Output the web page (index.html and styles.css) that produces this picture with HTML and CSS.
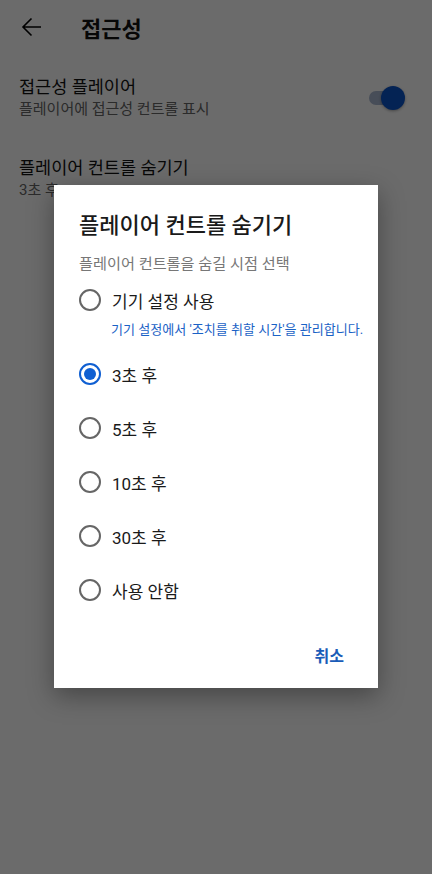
FILE: index.html
```html
<!DOCTYPE html>
<html lang="ko">
<head>
<meta charset="utf-8">
<link rel="stylesheet" href="styles.css">
</head>
<body>
<div class="page">
  <header class="appbar">
    <svg class="back" width="24" height="24" viewBox="0 0 24 24"><path d="M21 12H3.5M11.5 3.5L3 12l8.5 8.5" fill="none" stroke="#000" stroke-width="1.6"/></svg>
    <h1 class="appbar-title">접근성</h1>
  </header>
  <div class="setting">
    <div class="setting-text">
      <div class="setting-title">접근성 플레이어</div>
      <div class="setting-sub">플레이어에 접근성 컨트롤 표시</div>
    </div>
    <div class="switch"><div class="switch-track"></div><div class="switch-thumb"></div></div>
  </div>
  <div class="setting">
    <div class="setting-text">
      <div class="setting-title">플레이어 컨트롤 숨기기</div>
      <div class="setting-sub">3초 후</div>
    </div>
  </div>
</div>
<div class="scrim"></div>
<div class="dialog">
  <h2 class="dialog-title">플레이어 컨트롤 숨기기</h2>
  <p class="dialog-sub">플레이어 컨트롤을 숨길 시점 선택</p>
  <ul class="options">
    <li class="option option-device">
      <div class="option-row"><span class="radio"></span><span class="label">기기 설정 사용</span></div>
      <div class="hint">기기 설정에서 '조치를 취할 시간'을 관리합니다.</div>
    </li>
    <li class="option"><div class="option-row"><span class="radio checked"></span><span class="label">3초 후</span></div></li>
    <li class="option"><div class="option-row"><span class="radio"></span><span class="label">5초 후</span></div></li>
    <li class="option"><div class="option-row"><span class="radio"></span><span class="label">10초 후</span></div></li>
    <li class="option"><div class="option-row"><span class="radio"></span><span class="label">30초 후</span></div></li>
    <li class="option"><div class="option-row"><span class="radio"></span><span class="label">사용 안함</span></div></li>
  </ul>
  <div class="actions"><button class="btn">취소</button></div>
</div>
</body>
</html>
```
FILE: styles.css
```css
* { box-sizing: border-box; }
html, body { margin: 0; padding: 0; }
body {
  width: 432px;
  height: 874px;
  background: #fff;
  font-family: Roboto, "Noto Sans CJK KR", sans-serif;
  color: #111;
  overflow: hidden;
  position: relative;
}
.page { padding: 0; }
.appbar {
  height: 54px;
  display: flex;
  align-items: center;
  padding-left: 20px;
}
.back { display: block; }
.appbar-title {
  margin: 0 0 0 37px;
  font-size: 22px;
  font-weight: 700;
  color: #111;
}
.setting {
  display: flex;
  align-items: center;
  padding: 0 27px 0 19px;
}
.setting:nth-of-type(1) { margin-top: 22px; }
.setting + .setting { margin-top: 37px; }
.setting-text { flex: 1; }
.setting-title { font-size: 17.5px; line-height: 22px; color: #111; }
.setting-sub { font-size: 15px; line-height: 22px; color: #666; }
.switch { position: relative; width: 36px; height: 24px; }
.switch-track {
  position: absolute; left: 0; top: 5px; width: 34px; height: 14px;
  border-radius: 7px; background: #aab8d2;
}
.switch-thumb {
  position: absolute; right: 0; top: 0; width: 24px; height: 24px;
  border-radius: 50%; background: #0a53c9;
  box-shadow: 0 1px 3px rgba(0,0,0,0.35);
}
.scrim {
  position: absolute; inset: 0;
  background: rgba(0,0,0,0.58);
}
.dialog {
  position: absolute;
  left: 54px; top: 185px;
  width: 324px; height: 503px;
  background: #fff;
  box-shadow: 0 8px 24px rgba(0,0,0,0.35);
  padding: 25px 0 0 0;
}
.dialog-title {
  margin: 0 0 0 25px;
  font-size: 22px;
  line-height: 32px;
  font-weight: 500;
  color: #1a1a1a;
}
.dialog-sub {
  margin: 13px 0 0 25px;
  font-size: 15.2px;
  line-height: 18px;
  color: #777;
}
.options { list-style: none; margin: 10px 0 0 0; padding: 0; }
.option { padding-left: 25px; }
.option-row { display: flex; align-items: center; height: 34px; }
.option + .option { margin-top: 20px; }
.option-device + .option { margin-top: 19px; }
.radio {
  width: 22px; height: 22px; border-radius: 50%;
  border: 2px solid #666;
  flex: none;
  position: relative;
}
.radio.checked { border-color: #0f5fd2; }
.radio.checked::after {
  content: ""; position: absolute; left: 3px; top: 3px;
  width: 12px; height: 12px; border-radius: 50%; background: #0f5fd2;
}
.label { margin-left: 11px; font-size: 17px; color: #1a1a1a; }
.hint {
  margin: 2px 0 0 32px;
  font-size: 13.05px;
  color: #1a62c6;
  white-space: nowrap;
}
.actions { display: flex; justify-content: flex-end; padding: 36px 34px 0 0; }
.btn {
  border: 0; background: none; padding: 0;
  font-family: Roboto, "Noto Sans CJK KR", sans-serif;
  font-size: 16px; font-weight: 700; color: #1a5cb8;
}
```
